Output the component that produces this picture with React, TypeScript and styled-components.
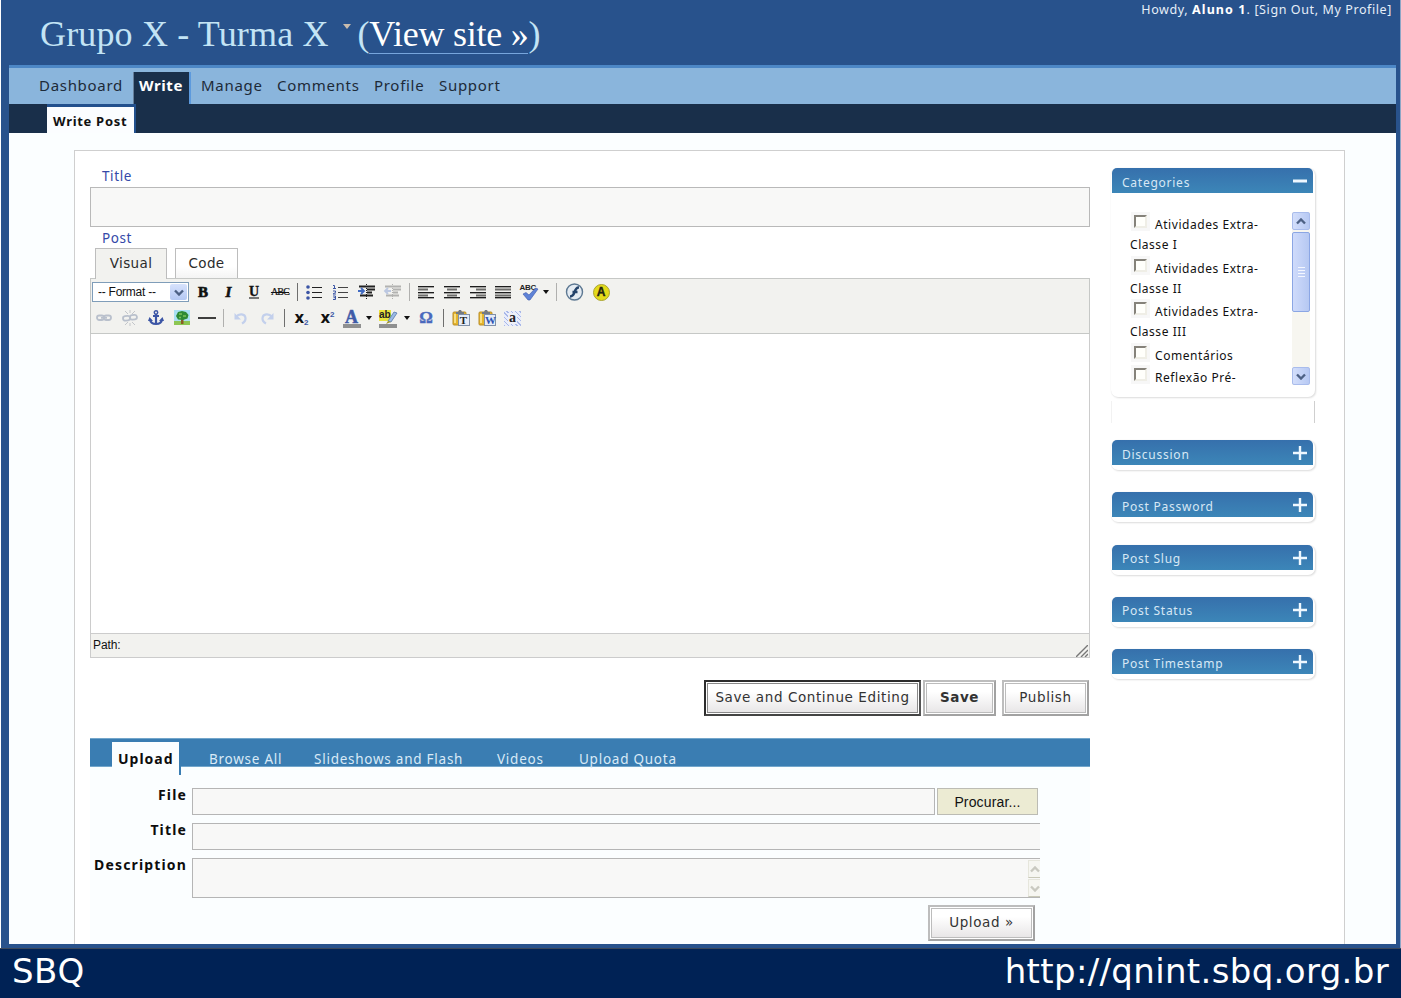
import React from 'react'
import styled, { createGlobalStyle, css } from 'styled-components'

const GlobalStyle = createGlobalStyle`
  * {
    box-sizing: border-box;
  }

  body {
    margin: 0;
    background: #ffffff;
    font-family: 'Noto Sans', 'DejaVu Sans', sans-serif;
    font-size: 14px;
    color: #1c1c1c;
  }
`

const Page = styled.div`
  display: flex;
  flex-direction: column;
  width: 1401px;
  height: 998px;
  overflow: hidden;
  white-space: nowrap;
`

const Frame = styled.div`
  display: flex;
  flex-direction: column;
  height: 948px;
  padding: 0 4px 4px 8px;
  border-left: 1px solid #ffffff;
  border-right: 1px solid #8ea6c6;
  background: #28528c;
`

const Header = styled.header`
  display: flex;
  justify-content: space-between;
  height: 65px;
  padding-left: 31px;
`

const SiteName = styled.h1`
  display: flex;
  align-items: flex-start;
  margin: 0;
  padding-top: 14px;
  font: 36px/41px 'Liberation Serif', serif;
  letter-spacing: 0.15px;
  color: #c3e4f5;
`

const TitleArrow = styled.svg`
  width: 8px;
  height: 5px;
  margin: 10px 7px 0 14px;
`

const ViewSite = styled.span`
  letter-spacing: -0.25px;
`

const ViewLink = styled.a`
  display: inline-block;
  height: 40px;
  border-bottom: 1px solid #77a5dc;
  color: #ffffff;
`

const UserInfo = styled.div`
  padding-right: 4px;
  font-size: 12.5px;
  line-height: 20px;
  letter-spacing: 0.6px;
  color: #e6eef8;

  b {
    color: #ffffff;
    letter-spacing: 1.1px;
  }
`

const Menu = styled.nav`
  display: flex;
  height: 39px;
  padding-left: 21px;
  border-top: 3px solid #4c87c6;
  background: #8ab5dc;
`

const MenuItem = styled.a<{ active?: boolean; width: number }>`
  width: ${({ width }) => width}px;
  padding-left: 9px;
  font-size: 15px;
  line-height: 35px;
  letter-spacing: 0.7px;
  color: #1d2a38;

  ${({ active }) =>
    active &&
    css`
      height: 33px;
      margin: 4px 1px 0 2px;
      padding-left: 5px;
      border-left: 1px solid #667f9b;
      border-right: 2px solid #5d9add;
      background: #192f4a;
      color: #ffffff;
      font-weight: bold;
      line-height: 27px;
      letter-spacing: 0.6px;
    `}
`

const SubMenu = styled.div`
  height: 29px;
  padding-left: 38px;
  background: #192f4a;
`

const SubMenuItem = styled.a`
  display: block;
  width: 89px;
  height: 30px;
  border-top: 3px solid #22508d;
  border-right: 2px solid #22508d;
  padding-left: 6px;
  background: #fbfdff;
  color: #111111;
  font-size: 13px;
  font-weight: bold;
  line-height: 28px;
  letter-spacing: 0.7px;
`

const Content = styled.main`
  flex: 1;
  min-height: 0;
  padding: 17px 51px 0 65px;
  background: #fbfeff;
`

const Card = styled.div`
  display: flex;
  gap: 21px;
  height: 100%;
  padding: 0 0 0 15px;
  border: 1px solid #cfcfcf;
  border-width: 1px 1px 0;
  background: #ffffff;
`

const Editor = styled.section`
  display: flex;
  flex-direction: column;
  width: 1000px;
  padding-top: 15px;
`

const FieldName = styled.label`
  height: 21px;
  padding: 1px 0 0 12px;
  font-size: 13.5px;
  line-height: 18px;
  letter-spacing: 0.6px;
  color: #3449a8;
`

const TitleInput = styled.div`
  height: 40px;
  margin-bottom: 1px;
  border: 1px solid #b9b9b9;
  background: #f8f8f7;
`

const EditorTabs = styled.div`
  display: flex;
  gap: 8px;
  height: 30px;
  margin-top: -1px;
  padding-left: 5px;
`

const EditorTab = styled.a<{ active?: boolean; width: number }>`
  z-index: 1;
  width: ${({ width }) => width}px;
  height: ${({ active }) => (active ? 31 : 30)}px;
  border: 1px solid #bdbdbd;
  border-bottom: 0;
  background: ${({ active }) => (active ? '#f2f2ef' : 'linear-gradient(#ffffff 60%, #f4f4f4)')};
  font-family: 'DejaVu Sans', sans-serif;
  font-size: 13.5px;
  line-height: 28px;
  letter-spacing: 0.4px;
  text-align: center;
  color: #2b2b2b;
`

const Toolbar = styled.div`
  height: 56px;
  border: 1px solid #c6c8c6;
  background: #f2f2ef;
`

const ToolbarRow = styled.div`
  display: flex;
  align-items: center;
  height: 26px;
`

const Tool = styled.span<{ width: number }>`
  display: flex;
  align-items: center;
  justify-content: center;
  flex: none;
  width: ${({ width }) => width}px;

  svg {
    display: block;
    overflow: visible;
  }
`

const Divider = styled.i<{ light?: boolean }>`
  width: 1px;
  height: 18px;
  background: ${({ light }) => (light ? '#b0b0ae' : '#6f6f6e')};
`

const FormatSelect = styled.div`
  display: flex;
  justify-content: space-between;
  flex: none;
  width: 97px;
  height: 20px;
  margin: 0 1px;
  padding-left: 5px;
  border: 1px solid #7f9db9;
  background: #ffffff;
  font: 12px/19px 'Liberation Sans', sans-serif;
  letter-spacing: -0.25px;
  color: #111111;
`

const SelectArrow = styled.span`
  display: flex;
  align-items: center;
  justify-content: center;
  width: 17px;
  margin: 1px;
  border-radius: 2px;
  background: linear-gradient(#d7e2fc, #b4c8f3);
`

const TextArea = styled.div`
  height: 299px;
  border: 1px solid #cccccc;
  border-width: 0 1px;
`

const PathBar = styled.div`
  display: flex;
  align-items: flex-end;
  justify-content: space-between;
  height: 25px;
  padding: 0 1px 0 2px;
  border: 1px solid #cccccc;
  background: #f2f2ef;
  font: 12px/23px 'Liberation Sans', sans-serif;
  letter-spacing: -0.1px;
  color: #111111;
`

const Actions = styled.div`
  display: flex;
  justify-content: flex-end;
  margin: 22px 1px 22px 0;
`

const Button = styled.button<{ width: number; gap?: number; main?: boolean }>`
  width: ${({ width }) => width}px;
  height: 36px;
  margin-right: ${({ gap = 0 }) => gap}px;
  padding: 0 0 2px;
  border: ${({ main }) => (main ? '2px solid #2d2d2d' : '2px solid #bdbdbd')};
  border-right-color: ${({ main }) => (main ? '#555555' : '#a2a2a2')};
  border-bottom-color: ${({ main }) => (main ? '#444444' : '#a2a2a2')};
  background: linear-gradient(#ffffff 30%, #e6e4e5);
  box-shadow: inset 0 0 0 1px #ffffff, inset 0 0 0 2px ${({ main }) => (main ? '#8a8a8a' : '#bcbcbc')};
  font-family: 'DejaVu Sans', sans-serif;
  font-size: 13.5px;
  letter-spacing: 0.6px;
  color: #333333;
`

const UploadBox = styled.section`
  flex: 1;
  background: #fbfeff;
`

const UploadTabs = styled.div`
  display: flex;
  height: 29px;
  padding-left: 22px;
  background: #3a7db2;
  color: #d9eaf7;
  border-top: 1px solid #73a6cb;
  border-bottom: 1px solid #73a6cb;
`

const UploadTab = styled.a<{ active?: boolean; width: number }>`
  width: ${({ width }) => width}px;
  height: 27px;
  font-size: 13.5px;
  line-height: 40px;
  letter-spacing: 0.75px;

  ${({ active }) =>
    active &&
    css`
      height: 33px;
      margin: 3px 28px 0 0;
      padding-left: 6px;
      border-right: 2px solid #3a7db2;
      background: #fbfeff;
      color: #0d0d0d;
      font-size: 14px;
      font-weight: bold;
      line-height: 34px;
      letter-spacing: 1px;
    `}
`

const UploadForm = styled.div`
  display: grid;
  grid-template-columns: 97px 848px;
  column-gap: 6px;
  row-gap: 8px;
  padding-top: 21px;
`

const UploadLabel = styled.label`
  text-align: right;
  font-size: 14px;
  font-weight: bold;
  line-height: 14px;
  letter-spacing: 1.15px;
  color: #0d0d0d;
`

const FileField = styled.div`
  display: flex;
  gap: 2px;
`

const UploadInput = styled.div<{ width: number; height?: number; open?: boolean }>`
  display: flex;
  justify-content: flex-end;
  width: ${({ width }) => width}px;
  height: ${({ height = 27 }) => height}px;
  margin-left: -1px;
  border: 1px solid #b5b5b5;
  ${({ open }) => open && 'border-right: 0;'}
  background: #f8f8f7;
`

const BrowseButton = styled.button`
  width: 101px;
  height: 27px;
  padding: 0;
  border: 1px solid #bcbcb4;
  background: #ecebd3;
  font: 14px 'Liberation Sans', sans-serif;
  letter-spacing: 0.15px;
  color: #111111;
`

const UploadFooter = styled.div`
  display: flex;
  justify-content: flex-end;
  margin: 7px 55px 0 0;
`

const DisabledScroll = styled.div`
  display: flex;
  flex-direction: column;
  gap: 1px;
  padding-top: 1px;
`

const DisabledArrow = styled.span`
  display: flex;
  align-items: center;
  justify-content: center;
  width: 12px;
  height: 18px;
  border: 1px solid #e6e6dc;
  border-right: 0;
  border-bottom-color: #c9c9b8;
  background: #f6f6f1;
`

const Sidebar = styled.aside`
  display: flex;
  flex-direction: column;
  width: 204px;
  padding-top: 17px;
`

const Panel = styled.section<{ gap: number }>`
  width: 204px;
  margin-bottom: ${({ gap }) => gap}px;
  padding: 0 2px 5px 1px;
  border-radius: 7px;
  background: #ffffff;
  box-shadow: 1px 1px 2px #dcdcdc, 0 0 1px #e2e2e2;
`

const PanelHead = styled.h3`
  display: flex;
  align-items: center;
  justify-content: space-between;
  height: 25px;
  margin: 0;
  padding: 3px 6px 0 10px;
  border-radius: 5px 5px 0 0;
  background: linear-gradient(#3670ac, #3c86b8);
  color: #d7e8f5;
  font-size: 12px;
  font-weight: normal;
  letter-spacing: 0.75px;

  svg {
    margin-bottom: 2px;
  }
`

const Categories = styled.div`
  display: flex;
  justify-content: space-between;
  height: 199px;
  padding: 19px 3px 0 18px;
`

const CategoryList = styled.ul`
  width: 140px;
  height: 176px;
  margin: 0;
  padding: 3px 0 0;
  overflow: hidden;
  list-style: none;
`

const Category = styled.li<{ height: number }>`
  height: ${({ height }) => height}px;
  font-size: 12px;
  line-height: 20px;
  letter-spacing: 0.55px;
  white-space: pre-line;
  color: #111111;
`

const Check = styled.span`
  display: inline-block;
  width: 13px;
  height: 13px;
  margin: 0 8px 0 4px;
  border: 2px solid;
  border-color: #85827a #efeee6 #efeee6 #85827a;
  background: #fffffb;
  outline: 3px solid #f7f7f7;
  vertical-align: 1px;
`

const Scroll = styled.div`
  display: flex;
  flex-direction: column;
  width: 18px;
  height: 173px;
  background: #f7f6f0;
`

const ScrollButton = styled.span`
  display: flex;
  align-items: center;
  justify-content: center;
  height: 18px;
  border: 1px solid #a9bcec;
  border-radius: 2px;
  background: linear-gradient(90deg, #d3defb, #b7c9f3);
`

const ScrollThumb = styled.span`
  display: flex;
  flex-direction: column;
  align-items: center;
  justify-content: center;
  gap: 1px;
  height: 80px;
  margin: 2px 0 auto;
  border: 1px solid #8ba6e4;
  border-radius: 2px;
  background: linear-gradient(90deg, #cfdbfb, #b6c8f2);

  i {
    width: 7px;
    height: 1px;
    margin-bottom: 1px;
    background: #f4f7ff;
  }
`

const PanelRest = styled.div`
  height: 22px;
  margin: 4px 0 17px;
  border-left: 1px solid #f2f2f2;
  border-right: 1px solid #cfcfcf;
`

const Footer = styled.footer`
  display: flex;
  align-items: center;
  justify-content: space-between;
  height: 50px;
  padding: 0 12px 6px 12px;
  border-top: 1px solid #3c4859;
  background: #002255;
  font: 34px/42px 'DejaVu Sans', sans-serif;
  letter-spacing: 0.35px;
  color: #ffffff;
`

const BLUE = '#3b55a5'

interface GlyphProps {
  children: React.ReactNode
  width?: number
}

const Glyph: React.FC<GlyphProps> = ({ children, width = 16 }) => (
  <svg width={width} height="16" viewBox={`0 0 ${width} 16`} fill="none">
    {children}
  </svg>
)

const Letter = styled.b`
  font: bold 15px/16px 'Liberation Serif', serif;
  color: #111111;
  -webkit-text-stroke: 0.7px #111111;
`

const ItalicLetter = styled(Letter)`
  font-style: italic;
`

const UnderLetter = styled(Letter)`
  border-bottom: 2px solid #777777;
  font-size: 14px;
  line-height: 11px;
  -webkit-text-stroke: 0.3px #111111;
`

const Strike = styled.span`
  font: 10px/12px 'Liberation Serif', serif;
  letter-spacing: -0.8px;
  text-decoration: line-through;
  color: #111111;
  -webkit-text-stroke: 0.2px #111111;
`

const Script = styled.b`
  font: bold 15px/16px 'DejaVu Sans', sans-serif;
  color: #111111;

  sub,
  sup {
    font: bold 8px/8px 'Liberation Sans', sans-serif;
    color: ${BLUE};
  }

  sub {
    vertical-align: -2px;
  }
`

const Omega = styled.b`
  font: bold 17px/16px 'Liberation Serif', serif;
  color: #4a69bd;
  -webkit-text-stroke: 0.4px #4a69bd;
`

const ColorLetter = styled.b`
  width: 18px;
  height: 18px;
  margin-top: 1px;
  border-bottom: 4px solid #8f9090;
  font: bold 18px/14px 'Liberation Serif', serif;
  text-align: center;
  color: #3f5ba8;
  -webkit-text-stroke: 0.5px #3f5ba8;
`

const Caret: React.FC = () => (
  <svg width="6" height="4" viewBox="0 0 6 4">
    <path d="M0 0h6L3 4z" fill="#111" />
  </svg>
)

const Chevron: React.FC<{ up?: boolean; color?: string }> = ({ up, color = '#4d6185' }) => (
  <svg width="10" height="7" viewBox="0 0 10 7" fill="none">
    <path d={up ? 'M1 5.5l4-4 4 4' : 'M1 1.5l4 4 4-4'} stroke={color} strokeWidth="2.4" />
  </svg>
)

const Sign: React.FC<{ open?: boolean }> = ({ open }) => (
  <svg width="14" height="14" viewBox="0 0 14 14">
    <path d={open ? 'M0 5.5h14v3H0z' : 'M0 5.8h5.8V0h2.4v5.8H14v2.4H8.2V14H5.8V8.2H0z'} fill="#eff8ff" />
  </svg>
)

const BulletList: React.FC = () => (
  <Glyph>
    <path d="M6 3.5h10M6 8.5h10M6 13.5h10" stroke="#222" />
    <circle cx="2" cy="3" r="1.8" fill={BLUE} />
    <circle cx="2" cy="8.5" r="1.8" fill={BLUE} />
    <circle cx="2" cy="14" r="1.8" fill={BLUE} />
  </Glyph>
)

const NumberList: React.FC = () => (
  <Glyph>
    <path d="M6 3.5h10M6 8.5h10M6 13.5h10" stroke="#444" />
    <path d="M1 1.5h1.5v3M1 4.500h3M1 7h2.500v1.500L1 10h3M1 12h2.500v3.500H1M1.500 13.700h2" stroke={BLUE} />
  </Glyph>
)

const Indent: React.FC<{ out?: boolean }> = ({ out }) => (
  <Glyph width={18}>
    <g opacity={out ? 0.3 : 1}>
      <path d="M1 2.500h16M9 5.500h8M9 8.500h5M2 11.500h13" stroke="#222" strokeWidth="2" />
      <path d="M8.500 0v16" stroke="#222" strokeDasharray="1 1" />
      <path d={out ? 'M7 7H1M4 4l-3 3 3 3' : 'M0 7h6M3 4l3 3-3 3'} stroke="#416bc2" strokeWidth="1.800" />
    </g>
  </Glyph>
)

// outer lines are full width, the two dark inner ones follow the alignment
const alignLines = {
  left: 'M0 5.5h10M0 11.5h10',
  center: 'M3 5.5h10M3 11.5h10',
  right: 'M6 5.5h10M6 11.5h10',
  full: 'M0 5.5h16M0 11.5h16'
}

const Align: React.FC<{ kind: keyof typeof alignLines }> = ({ kind }) => (
  <Glyph>
    <path d="M0 3.500h16M0 9.500h16M0 14.500h16" stroke="#a5a5a3" />
    <path d={alignLines[kind]} stroke="#6d6d6b" strokeWidth="2" />
    <path d="M0 2.500h16M0 8.500h16M0 13.500h16" stroke="#1d1d1d" />
  </Glyph>
)

const SpellMark = styled.span`
  position: relative;
  width: 18px;
  height: 17px;
  font: bold 8px/7px 'Liberation Sans', sans-serif;
  letter-spacing: -0.3px;
  color: #222222;

  svg {
    position: absolute;
    top: 3px;
    left: 2px;
  }
`

const Spell: React.FC = () => (
  <SpellMark>
    ABC
    <svg width="16" height="14" viewBox="0 0 16 14">
      <path d="M1 7l3-1.500 3 2.500 6.500-7L16 2 8 13H6z" fill="#5e82d6" stroke="#3b57ab" strokeWidth=".6" />
    </svg>
  </SpellMark>
)

const Flash: React.FC = () => (
  <Glyph width={18}>
    <circle cx="8.500" cy="8" r="8" fill="#e4ebf2" stroke="#5d7892" strokeWidth="1.400" />
    <path d="M13 3.500c-3-.2-3.700 2-4.500 4.700S6.700 12.500 4 12.500M6.500 8h5" stroke="#23426a" strokeWidth="2.400" />
  </Glyph>
)

const Badge = styled.b`
  width: 17px;
  height: 17px;
  border: 1px solid #aaa432;
  border-radius: 50%;
  background: #e3da1b;
  font: bold 12px/15px 'Liberation Sans', sans-serif;
  text-align: center;
  color: #222211;
  -webkit-text-stroke: 0.4px #222211;
`

const Link: React.FC<{ broken?: boolean }> = ({ broken }) => (
  <Glyph>
    <g stroke="#b9c0cc" strokeWidth="1.8" transform={broken ? 'rotate(-8 8 8)' : undefined}>
      <rect x="1" y="5.5" width="7" height="4.5" rx="2.2" />
      <rect x="8" y="5.5" width="7" height="4.5" rx="2.2" />
      {!broken && <path d="M5 7.8h6" />}
    </g>
    {broken && <path d="M8 0v3M3 1l3 3M13 1l-3 3M8 16v-3M3 15l3-3M13 15l-3-3" stroke="#c3c6ca" />}
  </Glyph>
)

const Anchor: React.FC = () => (
  <Glyph>
    <circle cx="8" cy="2.5" r="1.7" stroke={BLUE} strokeWidth="1.5" />
    <path d="M8 4v10M5 6h6M2 9c.3 3.5 3 5 6 5s5.700-1.500 6-5" stroke={BLUE} strokeWidth="2.2" />
    <path d="M0 11l1.500-4L5 11zM11 11l3.500-4L16 11z" fill={BLUE} />
  </Glyph>
)

const Picture: React.FC = () => (
  <Glyph>
    <path d="M0 0h16v12H0z" fill="#a9e0f3" />
    <path d="M0 11h16v4H0z" fill="#8dc653" />
    <path d="M7 8h2.500v6H7z" fill="#8b5a26" />
    <path d="M8 1l4 1 2.500 3-1 3.500-4.500 1.500-5-.5L2 6l2-4z" fill="#2d8a35" />
    <path d="M5 4h3M9 6h3M5 7.500h2" stroke="#7bc25a" strokeWidth="1.500" />
  </Glyph>
)

const Turn: React.FC<{ redo?: boolean }> = ({ redo }) => (
  <Glyph>
    <g transform={redo ? 'matrix(-1 0 0 1 16 0)' : undefined}>
      <path d="M3 7c3-4 9-3.500 9.500 1 .2 2.500-1.500 4.500-3.500 5.500" stroke="#c3d0ec" strokeWidth="2.200" />
      <path d="M1.500 3v6.500H8z" fill="#c3d0ec" />
    </g>
  </Glyph>
)

const Highlight = styled.span`
  position: relative;
  width: 18px;
  height: 18px;
  margin-top: 1px;
  border-bottom: 4px solid #8f9090;
  font: bold 10px/10px 'Liberation Sans', sans-serif;
  color: #222222;
  background: linear-gradient(#e9e53c, #e9e53c) 0 0 / 12px 11px no-repeat;

  svg {
    position: absolute;
    top: 1px;
    left: 6px;
  }
`

const Marker: React.FC = () => (
  <Highlight>
    ab
    <svg width="13" height="13" viewBox="0 0 13 13">
      <path d="M3 10L9 1l3 1-6 9z" fill="#9cbbe5" stroke="#5678ac" strokeWidth=".8" />
      <path d="M1 13l2-3 3 1z" fill="#a3962f" />
    </svg>
  </Highlight>
)

const Clipboard = styled.span<{ color: string }>`
  position: relative;
  width: 18px;
  height: 16px;

  b {
    position: absolute;
    right: 0;
    bottom: 0;
    width: 12px;
    height: 12px;
    border: 1px solid #8090a8;
    background: #e5ecf8;
    font: bold 11px/11px 'Liberation Serif', serif;
    text-align: center;
    color: ${({ color }) => color};
  }
`

const Paste: React.FC<{ letter: string; color: string }> = ({ letter, color }) => (
  <Clipboard color={color}>
    <Glyph>
      <rect x="1" y="2" width="13" height="13" rx="1" fill="#e5b52d" stroke="#b98d28" />
      <path d="M4 4V2h2l1-2h2l1 2h2v2z" fill="#747a83" />
      <path d="M3 4v9" stroke="#f8df83" strokeWidth="2" />
    </Glyph>
    <b>{letter}</b>
  </Clipboard>
)

const SelectedLetter = styled.b`
  width: 17px;
  height: 15px;
  background: repeating-linear-gradient(45deg, #a9b8e8 0 1px, #e9edfa 1px 3px);
  font: bold 14px/12px 'Liberation Serif', serif;
  text-align: center;
  color: #222222;

  span {
    display: block;
    width: 9px;
    height: 11px;
    margin: 2px auto;
    background: #eef0f8;
    line-height: 9px;
  }
`

type ToolItem = [number, React.ReactNode]

const firstRow: ToolItem[] = [
  [26, <Letter>B</Letter>],
  [25, <ItalicLetter>I</ItalicLetter>],
  [26, <UnderLetter>U</UnderLetter>],
  [26, <Strike>ABC</Strike>],
  [8, <Divider />],
  [26, <BulletList />],
  [26, <NumberList />],
  [27, <Indent />],
  [25, <Indent out />],
  [8, <Divider light />],
  [26, <Align kind="left" />],
  [26, <Align kind="center" />],
  [25, <Align kind="right" />],
  [26, <Align kind="full" />],
  [25, <Spell />],
  [10, <Caret />],
  [11, <Divider light />],
  [26, <Flash />],
  [26, <Badge>A</Badge>]
]

const secondRow: ToolItem[] = [
  [26, <Link />],
  [26, <Link broken />],
  [26, <Anchor />],
  [26, <Picture />],
  [23, <svg width="18" height="2"><path d="M0 1h18" stroke="#111" strokeWidth="1.6" /></svg>],
  [10, <Divider light />],
  [25, <Turn />],
  [27, <Turn redo />],
  [9, <Divider />],
  [25, <Script>x<sub>2</sub></Script>],
  [27, <Script>x<sup>2</sup></Script>],
  [21, <ColorLetter>A</ColorLetter>],
  [14, <Caret />],
  [24, <Marker />],
  [13, <Caret />],
  [26, <Omega>Ω</Omega>],
  [8, <Divider />],
  [27, <Paste letter="T" color="#222222" />],
  [26, <Paste letter="W" color="#2c54b4" />],
  [25, <SelectedLetter><span>a</span></SelectedLetter>]
]

const categories = [
  { name: 'Atividades Extra-\nClasse I', height: 43.5 },
  { name: 'Atividades Extra-\nClasse II', height: 43.5 },
  { name: 'Atividades Extra-\nClasse III', height: 43.5 },
  { name: 'Comentários', height: 22 },
  { name: 'Reflexão Pré-', height: 22 }
]

const panels = ['Discussion', 'Post Password', 'Post Slug', 'Post Status', 'Post Timestamp']

const renderTools = (tools: ToolItem[]) =>
  tools.map(([width, icon], index) => (
    <Tool key={index} width={width}>
      {icon}
    </Tool>
  ))

const PostEditor: React.FC = () => (
  <Editor>
    <FieldName>Title</FieldName>
    <TitleInput />
    <FieldName>Post</FieldName>
    <EditorTabs>
      <EditorTab active width={72}>
        Visual
      </EditorTab>
      <EditorTab width={63}>Code</EditorTab>
    </EditorTabs>
    <Toolbar>
      <ToolbarRow>
        <FormatSelect>
          -- Format --
          <SelectArrow>
            <Chevron />
          </SelectArrow>
        </FormatSelect>
        {renderTools(firstRow)}
      </ToolbarRow>
      <ToolbarRow>{renderTools(secondRow)}</ToolbarRow>
    </Toolbar>
    <TextArea />
    <PathBar>
      Path:
      <svg width="12" height="12" viewBox="0 0 12 12">
        <path d="M0 12L12 0M5 12l7-7M9 12l3-3" stroke="#777" strokeWidth="1.4" />
      </svg>
    </PathBar>
    <Actions>
      <Button main width={217} gap={2}>
        Save and Continue Editing
      </Button>
      <Button width={73} gap={6}>
        <b>Save</b>
      </Button>
      <Button width={87}>Publish</Button>
    </Actions>
    <UploadBox>
      <UploadTabs>
        <UploadTab active width={69}>
          Upload
        </UploadTab>
        <UploadTab width={105}>Browse All</UploadTab>
        <UploadTab width={183}>Slideshows and Flash</UploadTab>
        <UploadTab width={82}>Videos</UploadTab>
        <UploadTab width={110}>Upload Quota</UploadTab>
      </UploadTabs>
      <UploadForm>
        <UploadLabel>File</UploadLabel>
        <FileField>
          <UploadInput width={743} />
          <BrowseButton>Procurar...</BrowseButton>
        </FileField>
        <UploadLabel>Title</UploadLabel>
        <UploadInput width={848} open />
        <UploadLabel>Description</UploadLabel>
        <UploadInput width={848} height={40} open>
          <DisabledScroll>
            <DisabledArrow>
              <Chevron up color="#c9c9c0" />
            </DisabledArrow>
            <DisabledArrow>
              <Chevron color="#c9c9c0" />
            </DisabledArrow>
          </DisabledScroll>
        </UploadInput>
      </UploadForm>
      <UploadFooter>
        <Button width={107}>Upload »</Button>
      </UploadFooter>
    </UploadBox>
  </Editor>
)

const App: React.FC = () => (
  <Page>
    <GlobalStyle />
    <Frame>
      <Header>
        <SiteName>
          Grupo X - Turma X
          <TitleArrow viewBox="0 0 8 5">
            <path d="M0 0h8L4 5z" fill="#c9bcae" />
          </TitleArrow>
          <ViewSite>
            (<ViewLink>View site »</ViewLink>)
          </ViewSite>
        </SiteName>
        <UserInfo>
          Howdy, <b>Aluno 1</b>. [Sign Out, My Profile]
        </UserInfo>
      </Header>
      <Menu>
        <MenuItem width={101}>Dashboard</MenuItem>
        <MenuItem active width={58}>
          Write
        </MenuItem>
        <MenuItem width={76}>Manage</MenuItem>
        <MenuItem width={97}>Comments</MenuItem>
        <MenuItem width={65}>Profile</MenuItem>
        <MenuItem width={80}>Support</MenuItem>
      </Menu>
      <SubMenu>
        <SubMenuItem>Write Post</SubMenuItem>
      </SubMenu>
      <Content>
        <Card>
          <PostEditor />
          <Sidebar>
            <Panel gap={0}>
              <PanelHead>
                Categories
                <Sign open />
              </PanelHead>
              <Categories>
                <CategoryList>
                  {categories.map(({ name, height }) => (
                    <Category key={name} height={height}>
                      <Check />
                      {name}
                    </Category>
                  ))}
                </CategoryList>
                <Scroll>
                  <ScrollButton>
                    <Chevron up />
                  </ScrollButton>
                  <ScrollThumb>
                    <i />
                    <i />
                    <i />
                    <i />
                  </ScrollThumb>
                  <ScrollButton>
                    <Chevron />
                  </ScrollButton>
                </Scroll>
              </Categories>
            </Panel>
            <PanelRest />
            {panels.map(name => (
              <Panel key={name} gap={22.3}>
                <PanelHead>
                  {name}
                  <Sign />
                </PanelHead>
              </Panel>
            ))}
          </Sidebar>
        </Card>
      </Content>
    </Frame>
    <Footer>
      <span>SBQ</span>
      <span>http://qnint.sbq.org.br</span>
    </Footer>
  </Page>
)

export default App
